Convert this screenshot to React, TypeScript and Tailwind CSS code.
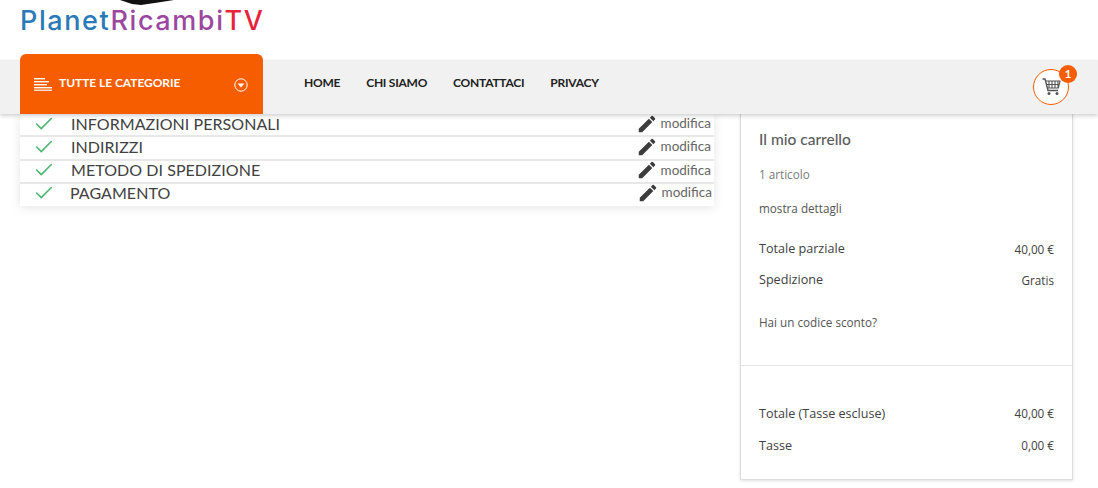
import { Check } from 'lucide-react';
import { MdEdit } from 'react-icons/md';

const steps = [
  { label: 'INFORMAZIONI PERSONALI', shift: false },
  { label: 'INDIRIZZI', shift: false },
  { label: 'METODO DI SPEDIZIONE', shift: false },
  { label: 'PAGAMENTO', shift: true },
];

const navLinks = ['HOME', 'CHI SIAMO', 'CONTATTACI', 'PRIVACY'];

function Row({ left, right, className }: { left: string; right: string; className?: string }) {
  return (
    <div className={`flex items-center justify-between text-[#414141] ${className ?? ''}`}>
      <span className="text-[12.6px]">{left}</span>
      <span className="text-[11.7px]">{right}</span>
    </div>
  );
}

export default function App() {
  return (
    <div className="h-[488px] w-[1098px] overflow-hidden bg-white font-['Open_Sans',sans-serif]">
      <header className="h-[60px] pl-5">
        <div className="relative w-[244px] pt-[6px]">
          <svg className="absolute left-[100px] top-0" width="54" height="6" viewBox="0 0 54 6">
            <path d="M0 0H54L38 2.5 21 5 12 4Z" fill="#111" />
          </svg>
          <div className="font-['Inter',sans-serif] text-[27px] font-medium leading-[30px] tracking-[1.6px] whitespace-nowrap">
            <span className="text-[#2a7ab8]">Planet</span>
            <span className="text-[#9b479f]">Ricambi</span>
            <span className="text-[#e8243c]">TV</span>
          </div>
        </div>
      </header>

      <nav className="relative z-10 flex h-[54px] items-start bg-[#f1f1f1] pl-5 pr-[29px] shadow-[0_2px_4px_rgba(0,0,0,0.18)] font-['Lato',sans-serif]">
        <div className="-mt-[6px] flex h-[60px] w-[243px] items-center rounded-t-[6px] bg-[#f65c00] pl-[14px] pr-[15px] text-white">
          <svg width="18" height="13" viewBox="0 0 18 13" fill="white">
            <rect x="0" y="0" width="11" height="1.4" />
            <rect x="0" y="3" width="15" height="1.4" />
            <rect x="0" y="6" width="13" height="1.4" />
            <rect x="0" y="9" width="18" height="1.4" />
            <rect x="0" y="11.6" width="18" height="1.2" />
          </svg>
          <span className="ml-[7px] -mt-[2px] text-[12px] font-bold tracking-[-0.05px]">TUTTE LE CATEGORIE</span>
          <svg className="ml-auto mt-[2px]" width="14" height="14" viewBox="0 0 14 14">
            <circle cx="7" cy="7" r="6.2" fill="none" stroke="white" strokeWidth="1" />
            <path d="M3.6 5.6H10.4L7 9.4Z" fill="white" />
          </svg>
        </div>

        <ul className="ml-[41px] -mt-[4px] flex h-full items-center gap-[26px] text-[12px] font-bold tracking-[-0.25px] text-[#222]">
          {navLinks.map((link) => (
            <li key={link}>{link}</li>
          ))}
        </ul>

        <div className="relative ml-auto mt-[9px] flex h-[36px] w-[36px] items-center justify-center rounded-full border border-[#f65c00] bg-white">
          <svg width="19" height="18" viewBox="0 0 19 18" fill="none" stroke="#555">
            <path d="M0.5 1H3L6 12.5H16" strokeWidth="1.4" />
            <path d="M3.6 3H18L16.4 10H5.4M7 3V10M10 3V10M13 3V10M16 3V10M4.4 6.5H17.2" strokeWidth="1.1" />
            <circle cx="7" cy="15.5" r="1.5" fill="#555" stroke="none" />
            <circle cx="15" cy="15.5" r="1.5" fill="#555" stroke="none" />
          </svg>
          <span className="absolute -right-[9px] -top-[5px] flex h-[18px] w-[18px] items-center justify-center rounded-full bg-[#f65c00] text-[12px] font-bold text-white">
            1
          </span>
        </div>
      </nav>

      <main className="flex items-start pl-5">
        <section className="flex w-[694px] flex-col shadow-[0_2px_10px_rgba(0,0,0,0.1)] font-['Lato',sans-serif]">
          {steps.map((step) => (
            <div
              key={step.label}
              className="flex h-[23.3px] items-center border-b-2 border-[#e8e8e8] bg-white pb-[2px] pl-[13px] pr-[3px] text-[#414141] last:h-[22px] last:border-b-0 last:pb-[4px] last:pr-[2px]"
            >
              <Check className="h-[22px] w-[22px] text-[#4cb66d]" strokeWidth={1.7} />
              <span
                className={`text-[16px] leading-none tracking-[0.05px] ${step.shift ? 'ml-[15px]' : 'ml-[16px]'}`}
              >
                {step.label}
              </span>
              <span className="ml-auto flex items-center gap-[3px] text-[13.5px] leading-none text-[#666]">
                <MdEdit className="h-[22px] w-[22px] text-[#3c3c3c]" />
                modifica
              </span>
            </div>
          ))}
        </section>

        <aside className="ml-[26px] h-[366px] w-[333px] border border-t-0 border-[#ddd] bg-white pt-[15px] shadow-[0_1px_3px_rgba(0,0,0,0.12)]">
          <div className="px-[18px]">
            <h2 className="text-[15.5px] font-medium leading-5 text-[#5c5c5c] font-['Lato',sans-serif]">Il mio carrello</h2>
            <p className="mt-[17px] text-[11.7px] leading-4 text-[#7a7a7a]">1 articolo</p>
            <p className="mt-[18px] text-[11.7px] leading-4 text-[#555]">mostra dettagli</p>
            <Row left="Totale parziale" right="40,00 €" className="mt-[24px]" />
            <Row left="Spedizione" right="Gratis" className="mt-[12px]" />
            <p className="mt-[24px] text-[11.7px] leading-4 text-[#555]">Hai un codice sconto?</p>
          </div>
          <div className="mt-[35px] border-t border-[#e4e4e4] px-[18px] pt-[39px]">
            <Row left="Totale (Tasse escluse)" right="40,00 €" />
            <Row left="Tasse" right="0,00 €" className="mt-[13px]" />
          </div>
        </aside>
      </main>
    </div>
  );
}
